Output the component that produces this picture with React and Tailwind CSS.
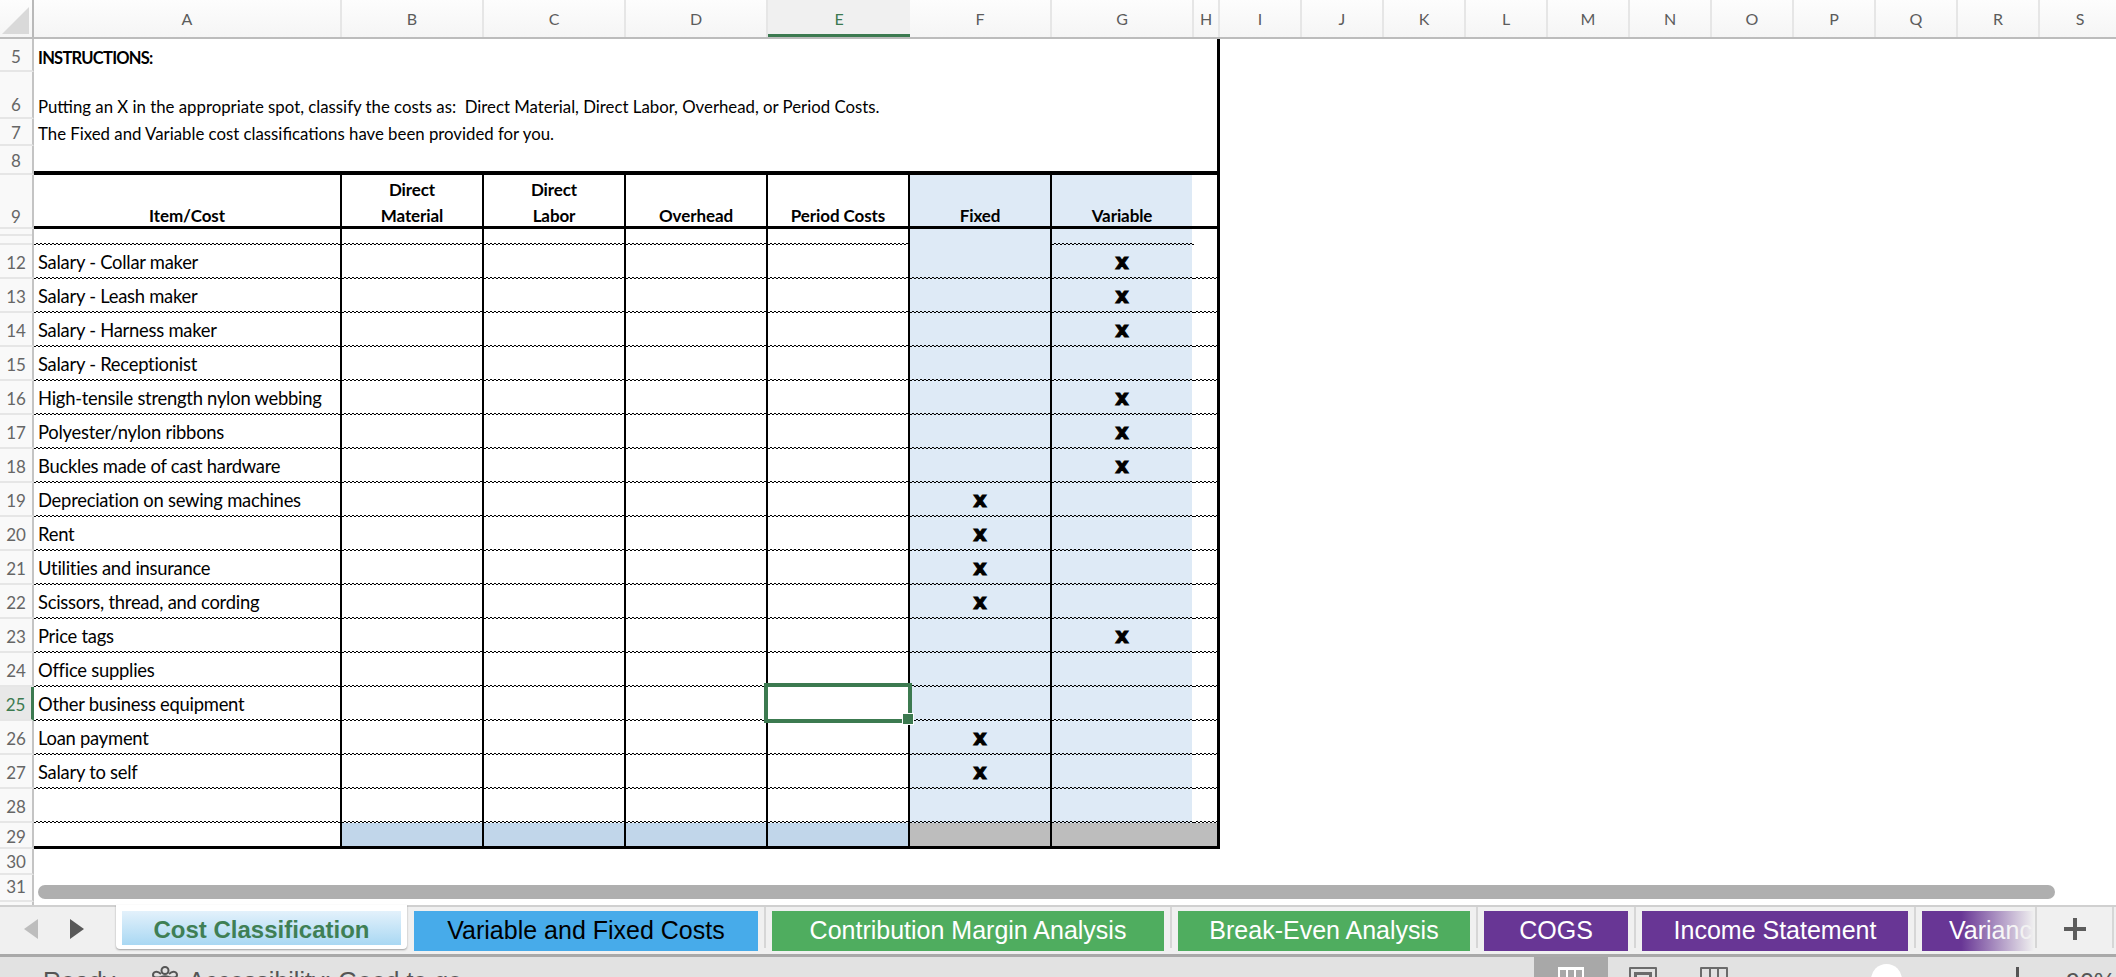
import React from 'react';

const letters = ['I', 'J', 'K', 'L', 'M', 'N', 'O', 'P', 'Q', 'R', 'S'];

const items = [
  [12, 'Salary - Collar maker', 'v'],
  [13, 'Salary - Leash maker', 'v'],
  [14, 'Salary - Harness maker', 'v'],
  [15, 'Salary - Receptionist', ''],
  [16, 'High-tensile strength nylon webbing', 'v'],
  [17, 'Polyester/nylon ribbons', 'v'],
  [18, 'Buckles made of cast hardware', 'v'],
  [19, 'Depreciation on sewing machines', 'f'],
  [20, 'Rent', 'f'],
  [21, 'Utilities and insurance', 'f'],
  [22, 'Scissors, thread, and cording', 'f'],
  [23, 'Price tags', 'v'],
  [24, 'Office supplies', ''],
  [25, 'Other business equipment', ''],
  [26, 'Loan payment', 'f'],
  [27, 'Salary to self', 'f'],
  [28, '', ''],
];

const tabs = [
  ['Variable and Fixed Costs', 'w-[344px] bg-[#47abea] text-black'],
  ['Contribution Margin Analysis', 'w-[392px] bg-[#4fad5f] text-white'],
  ['Break-Even Analysis', 'w-[292px] bg-[#4fad5f] text-white'],
  ['COGS', 'w-[144px] bg-[#683695] text-white'],
  ['Income Statement', 'w-[266px] bg-[#683695] text-white'],
];

function ColHead({ label, className = '', active }) {
  return (
    <div
      className={`h-full shrink-0 flex items-center justify-center text-[16px] ${
        active
          ? 'pt-[3px] bg-[#f0f0f0] text-[#3c7a50] border-b-[3px] border-[#3c7a50]'
          : 'text-[#5c5c5c] border-r-2 border-[#e6e6e6]'
      } ${className}`}
    >
      {label}
    </div>
  );
}

function RowNum({ n, className = '', active }) {
  return (
    <div
      className={`w-[34px] shrink-0 flex items-end justify-center text-[17px] leading-none border-b-2 border-[#e6e6e6] ${
        active
          ? 'bg-[#e8e8e8] text-[#3c7a50] border-r-[3px] border-r-[#3c7a50]'
          : 'bg-[#f9f9f9] text-[#666] border-r-2 border-r-[#c4c4c4]'
      } ${className}`}
    >
      {n}
    </div>
  );
}

function Dots() {
  return (
    <div className="absolute left-0 right-[-2px] bottom-0 h-[2px] bg-[conic-gradient(#000_25%,transparent_0_50%,#000_0_75%,transparent_0)] bg-[length:4px_2px]" />
  );
}

function Cell({ className = '', children, dots = true }) {
  return (
    <div className={`relative shrink-0 h-full border-r-2 border-black flex items-center justify-center ${className}`}>
      {children}
      {dots && <Dots />}
    </div>
  );
}

function Mark() {
  return <span className="font-['DejaVu_Sans',sans-serif] font-bold text-[21px] leading-none text-black [-webkit-text-stroke:1px_#000]">x</span>;
}

function HeadCell({ className = '', children }) {
  return (
    <div className={`shrink-0 h-full border-r-2 border-black flex flex-col items-center justify-end font-bold text-[17px] leading-[26px] tracking-[-0.1px] text-black ${className}`}>
      <div className="flex flex-col items-center -mb-[3px]">{children}</div>
    </div>
  );
}

function TableRow({ n, text, mark }) {
  const selected = n === 25;
  return (
    <div className="flex h-[34px] shrink-0">
      <RowNum n={n} active={selected} className="pb-[6px]" />
      <Cell className="w-[308px] justify-start pl-[4px] pt-[2px] text-[18.4px] tracking-[-0.25px] text-black">{text}</Cell>
      <Cell className="w-[142px]" />
      <Cell className="w-[142px]" />
      <Cell className="w-[142px]" />
      <Cell className="w-[142px]">
        {selected && (
          <div className="absolute z-10 -left-[4px] -top-[4px] right-[-4px] bottom-[-2px] border-[4px] border-[#3c7a50]">
            <div className="absolute -right-[6px] -bottom-[6px] w-[12px] h-[12px] bg-[#3c7a50] border-[1px] border-white" />
          </div>
        )}
      </Cell>
      <Cell className="w-[142px] bg-[#deeaf6]">{mark === 'f' && <Mark />}</Cell>
      <Cell className="w-[142px] bg-[#deeaf6] bg-clip-padding border-r-transparent">{mark === 'v' && <Mark />}</Cell>
      <Cell className="w-[26px] border-r-[3px]" />
    </div>
  );
}

export default function App() {
  return (
    <div className="w-[2116px] h-[977px] overflow-hidden flex flex-col bg-white font-['Lato',sans-serif]">
      {/* Column letters */}
      <div className="flex h-[39px] shrink-0 bg-[linear-gradient(180deg,#fdfdfd,#f5f5f5)] border-b-[2px] border-[#bcbcbc]">
        <div className="w-[34px] shrink-0 h-full relative border-r-2 border-[#b9b9b9]">
          <svg className="absolute left-[2px] top-[7px]" width="27" height="27" viewBox="0 0 27 27">
            <path d="M27 0V27H0Z" fill="#d9d9d9" />
          </svg>
        </div>
        <ColHead label="A" className="w-[308px]" />
        <ColHead label="B" className="w-[142px]" />
        <ColHead label="C" className="w-[142px]" />
        <ColHead label="D" className="w-[142px]" />
        <ColHead label="E" className="w-[142px]" active />
        <ColHead label="F" className="w-[142px]" />
        <ColHead label="G" className="w-[142px]" />
        <ColHead label="H" className="w-[26px]" />
        {letters.map((l) => (
          <ColHead key={l} label={l} className="w-[82px]" />
        ))}
      </div>

      {/* Sheet */}
      <div className="relative flex-1 min-h-0 flex flex-col overflow-hidden">
        <div className="flex h-[33px] shrink-0">
          <RowNum n={5} className="pb-[5px]" />
          <div className="w-[1186px] shrink-0 border-r-[3px] border-black pl-[4px] flex items-end pb-[1px] font-bold text-[16.5px] tracking-[-0.75px] text-black">INSTRUCTIONS:</div>
        </div>
        <div className="flex h-[47px] shrink-0">
          <RowNum n={6} className="pb-[4px]" />
          <div className="w-[1186px] shrink-0 border-r-[3px] border-black pl-[4px] flex items-end text-[16.8px] text-black">Putting an X in the appropriate spot, classify the costs as:&nbsp; Direct Material, Direct Labor, Overhead, or Period Costs.</div>
        </div>
        <div className="flex h-[27px] shrink-0">
          <RowNum n={7} className="pb-[3px]" />
          <div className="w-[1186px] shrink-0 border-r-[3px] border-black pl-[4px] flex items-end text-[16.8px] text-black">The Fixed and Variable cost classifications have been provided for you.</div>
        </div>
        <div className="flex h-[29px] shrink-0">
          <RowNum n={8} className="pb-[4px]" />
          <div className="w-[1186px] shrink-0 border-r-[3px] border-b-[4px] border-black" />
        </div>

        {/* Header row */}
        <div className="flex h-[54px] shrink-0">
          <RowNum n={9} className="pb-[2px]" />
          <div className="flex w-[1186px] shrink-0 border-b-[3px] border-black">
            <HeadCell className="w-[308px]">Item/Cost</HeadCell>
            <HeadCell className="w-[142px]"><span>Direct</span><span>Material</span></HeadCell>
            <HeadCell className="w-[142px]"><span>Direct</span><span>Labor</span></HeadCell>
            <HeadCell className="w-[142px]">Overhead</HeadCell>
            <HeadCell className="w-[142px]">Period Costs</HeadCell>
            <HeadCell className="w-[142px] bg-[#deeaf6]">Fixed</HeadCell>
            <HeadCell className="w-[142px] bg-[#deeaf6] bg-clip-padding border-r-transparent">Variable</HeadCell>
            <div className="w-[26px] shrink-0 border-r-[3px] border-black" />
          </div>
        </div>

        {/* Hidden rows 10 and 11 */}
        <div className="flex h-[16px] shrink-0">
          <div className="w-[34px] shrink-0 flex flex-col bg-[#f9f9f9] border-r-2 border-[#c4c4c4]">
            <div className="h-[7px] border-b-2 border-[#e6e6e6]" />
            <div className="h-[9px] border-b-2 border-[#e6e6e6]" />
          </div>
          <Cell className="w-[308px]" />
          <Cell className="w-[142px]" />
          <Cell className="w-[142px]" />
          <Cell className="w-[142px]" />
          <Cell className="w-[142px]" />
          <Cell className="w-[142px] bg-[#deeaf6]" dots={false} />
          <Cell className="w-[142px] bg-[#deeaf6] bg-clip-padding border-r-transparent" />
          <Cell className="w-[26px] border-r-[3px]" dots={false} />
        </div>

        {items.map(([n, text, mark]) => (
          <TableRow key={n} n={n} text={text} mark={mark} />
        ))}

        {/* Total row */}
        <div className="flex h-[26px] shrink-0">
          <RowNum n={29} className="pb-[2px]" />
          <div className="flex w-[1186px] shrink-0 border-b-[3px] border-black">
            <div className="w-[308px] shrink-0 border-r-2 border-black" />
            <div className="w-[142px] shrink-0 border-r-2 border-black bg-[#c1d6ea]" />
            <div className="w-[142px] shrink-0 border-r-2 border-black bg-[#c1d6ea]" />
            <div className="w-[142px] shrink-0 border-r-2 border-black bg-[#c1d6ea]" />
            <div className="w-[142px] shrink-0 border-r-2 border-black bg-[#c1d6ea]" />
            <div className="w-[142px] shrink-0 border-r-2 border-black bg-[#bdbdbd]" />
            <div className="w-[142px] shrink-0 bg-[#bdbdbd]" />
            <div className="w-[26px] shrink-0 border-r-[3px] border-black bg-[#bdbdbd]" />
          </div>
        </div>
        <div className="flex h-[26px] shrink-0"><RowNum n={30} className="pb-[3px]" /></div>
        <div className="flex h-[27px] shrink-0"><RowNum n={31} className="pb-[5px]" /></div>
        <div className="flex flex-1 min-h-0"><div className="w-[34px] bg-[#f9f9f9] border-r-2 border-[#c4c4c4]" /></div>

        {/* Overlay scrollbar */}
        <div className="absolute left-[38px] w-[2017px] bottom-[6px] h-[14px] rounded-full bg-[#afafaf]" />
      </div>

      {/* Sheet tabs */}
      <div className="h-[52px] shrink-0 flex bg-[#f0f0f0] border-t-[2px] border-[#d0d0d0] border-b-[3px] border-b-[#a9a9a9] text-[25px] font-['Liberation_Sans',sans-serif]">
        <div className="w-[116px] shrink-0 flex items-center pl-[24px] gap-[32px] pb-[3px]">
          <svg width="14" height="20" viewBox="0 0 14 20"><path d="M14 0V20L0 10Z" fill="#bdbdbd" /></svg>
          <svg width="14" height="20" viewBox="0 0 14 20"><path d="M0 0V20L14 10Z" fill="#595959" /></svg>
        </div>
        <div className="w-[291px] shrink-0 h-[44px] -mt-[2px] pt-[6px] px-[6px] bg-white rounded-b-[4px] shadow-[0_1px_2px_rgba(0,0,0,0.35)] z-10">
          <div className="h-[34px] pt-[3px] flex items-center justify-center font-bold text-[24px] text-[#3f7f55] bg-[linear-gradient(180deg,#e3f1fb,#a9d8f3)]">Cost Classification</div>
        </div>
        <div className="w-[7px] shrink-0" />
        {tabs.map(([label, cls]) => (
          <React.Fragment key={label}>
            <div className={`shrink-0 h-[40px] mt-[4px] flex items-center justify-center ${cls}`}>{label}</div>
            <div className="w-[14px] shrink-0 flex justify-center"><div className="w-[2px] h-[41px] bg-[#d6d6d6]" /></div>
          </React.Fragment>
        ))}
        <div className="relative w-[112px] shrink-0 h-[40px] mt-[4px] overflow-hidden bg-[#683695] text-white pl-[27px] flex items-center whitespace-nowrap">
          Variance Analysis
          <div className="absolute right-0 top-0 bottom-0 w-[73px] bg-[linear-gradient(90deg,rgba(240,240,240,0),#f0f0f0)]" />
        </div>
        <div className="w-[2px] h-[41px] shrink-0 ml-[1px] bg-[#d6d6d6]" />
        <div className="w-[75px] shrink-0 flex items-center justify-center text-[#5c5c5c] pb-[4px]">
          <svg width="22" height="22" viewBox="0 0 22 22"><path d="M9 0h4v9h9v4h-9v9H9v-9H0V9h9Z" fill="currentColor" /></svg>
        </div>
        <div className="w-[2px] h-[41px] shrink-0 bg-[#d6d6d6]" />
      </div>

      {/* Status bar, cut off by the window edge */}
      <div className="h-[20px] shrink-0 relative overflow-hidden bg-[#e2e2e2] flex text-[#555] text-[25px] font-['Liberation_Sans',sans-serif]">
        <span className="ml-[43px] mt-[12px] leading-none">Ready</span>
        <svg className="ml-[37px] mt-[9px]" width="26" height="24" viewBox="0 0 26 24" fill="none" stroke="#555" strokeWidth="2">
          <circle cx="13" cy="4.5" r="3.5" />
          <path d="M9 8C5 4 1 6 1 9c0 3 4 3 8 2 3-1 5-1 8 0 4 1 8 1 8-2 0-3-4-5-8-1" />
        </svg>
        <span className="ml-[10px] mt-[12px] leading-none whitespace-nowrap">Accessibility: Good to go</span>
        <div className="absolute left-[1534px] top-0 w-[74px] h-full bg-[#a8a8a8]">
          <div className="ml-[24px] mt-[10px] w-[26px] h-[14px] bg-white p-[2px] pt-[3px] flex gap-[2px]">
            <div className="flex-1 bg-[#a8a8a8]" />
            <div className="flex-1 bg-[#a8a8a8]" />
            <div className="flex-1 bg-[#a8a8a8]" />
          </div>
        </div>
        <div className="absolute left-[1629px] top-[10px] w-[28px] h-[20px] border-2 border-[#6b6b6b] rounded-[1px] p-[3px]">
          <div className="w-full h-full border-[3px] border-[#6b6b6b]" />
        </div>
        <div className="absolute left-[1700px] top-[10px] w-[28px] h-[20px] border-2 border-[#6b6b6b] rounded-[1px] flex justify-evenly">
          <div className="w-[2px] bg-[#6b6b6b]" />
          <div className="w-[2px] bg-[#6b6b6b]" />
        </div>
        <div className="absolute left-[1871px] top-[7px] w-[31px] h-[31px] rounded-full bg-white" />
        <div className="absolute left-[2016px] top-[10px] w-[3px] h-[14px] bg-[#555]" />
        <span className="absolute left-[2066px] top-[13px] leading-none">90%</span>
      </div>
    </div>
  );
}
